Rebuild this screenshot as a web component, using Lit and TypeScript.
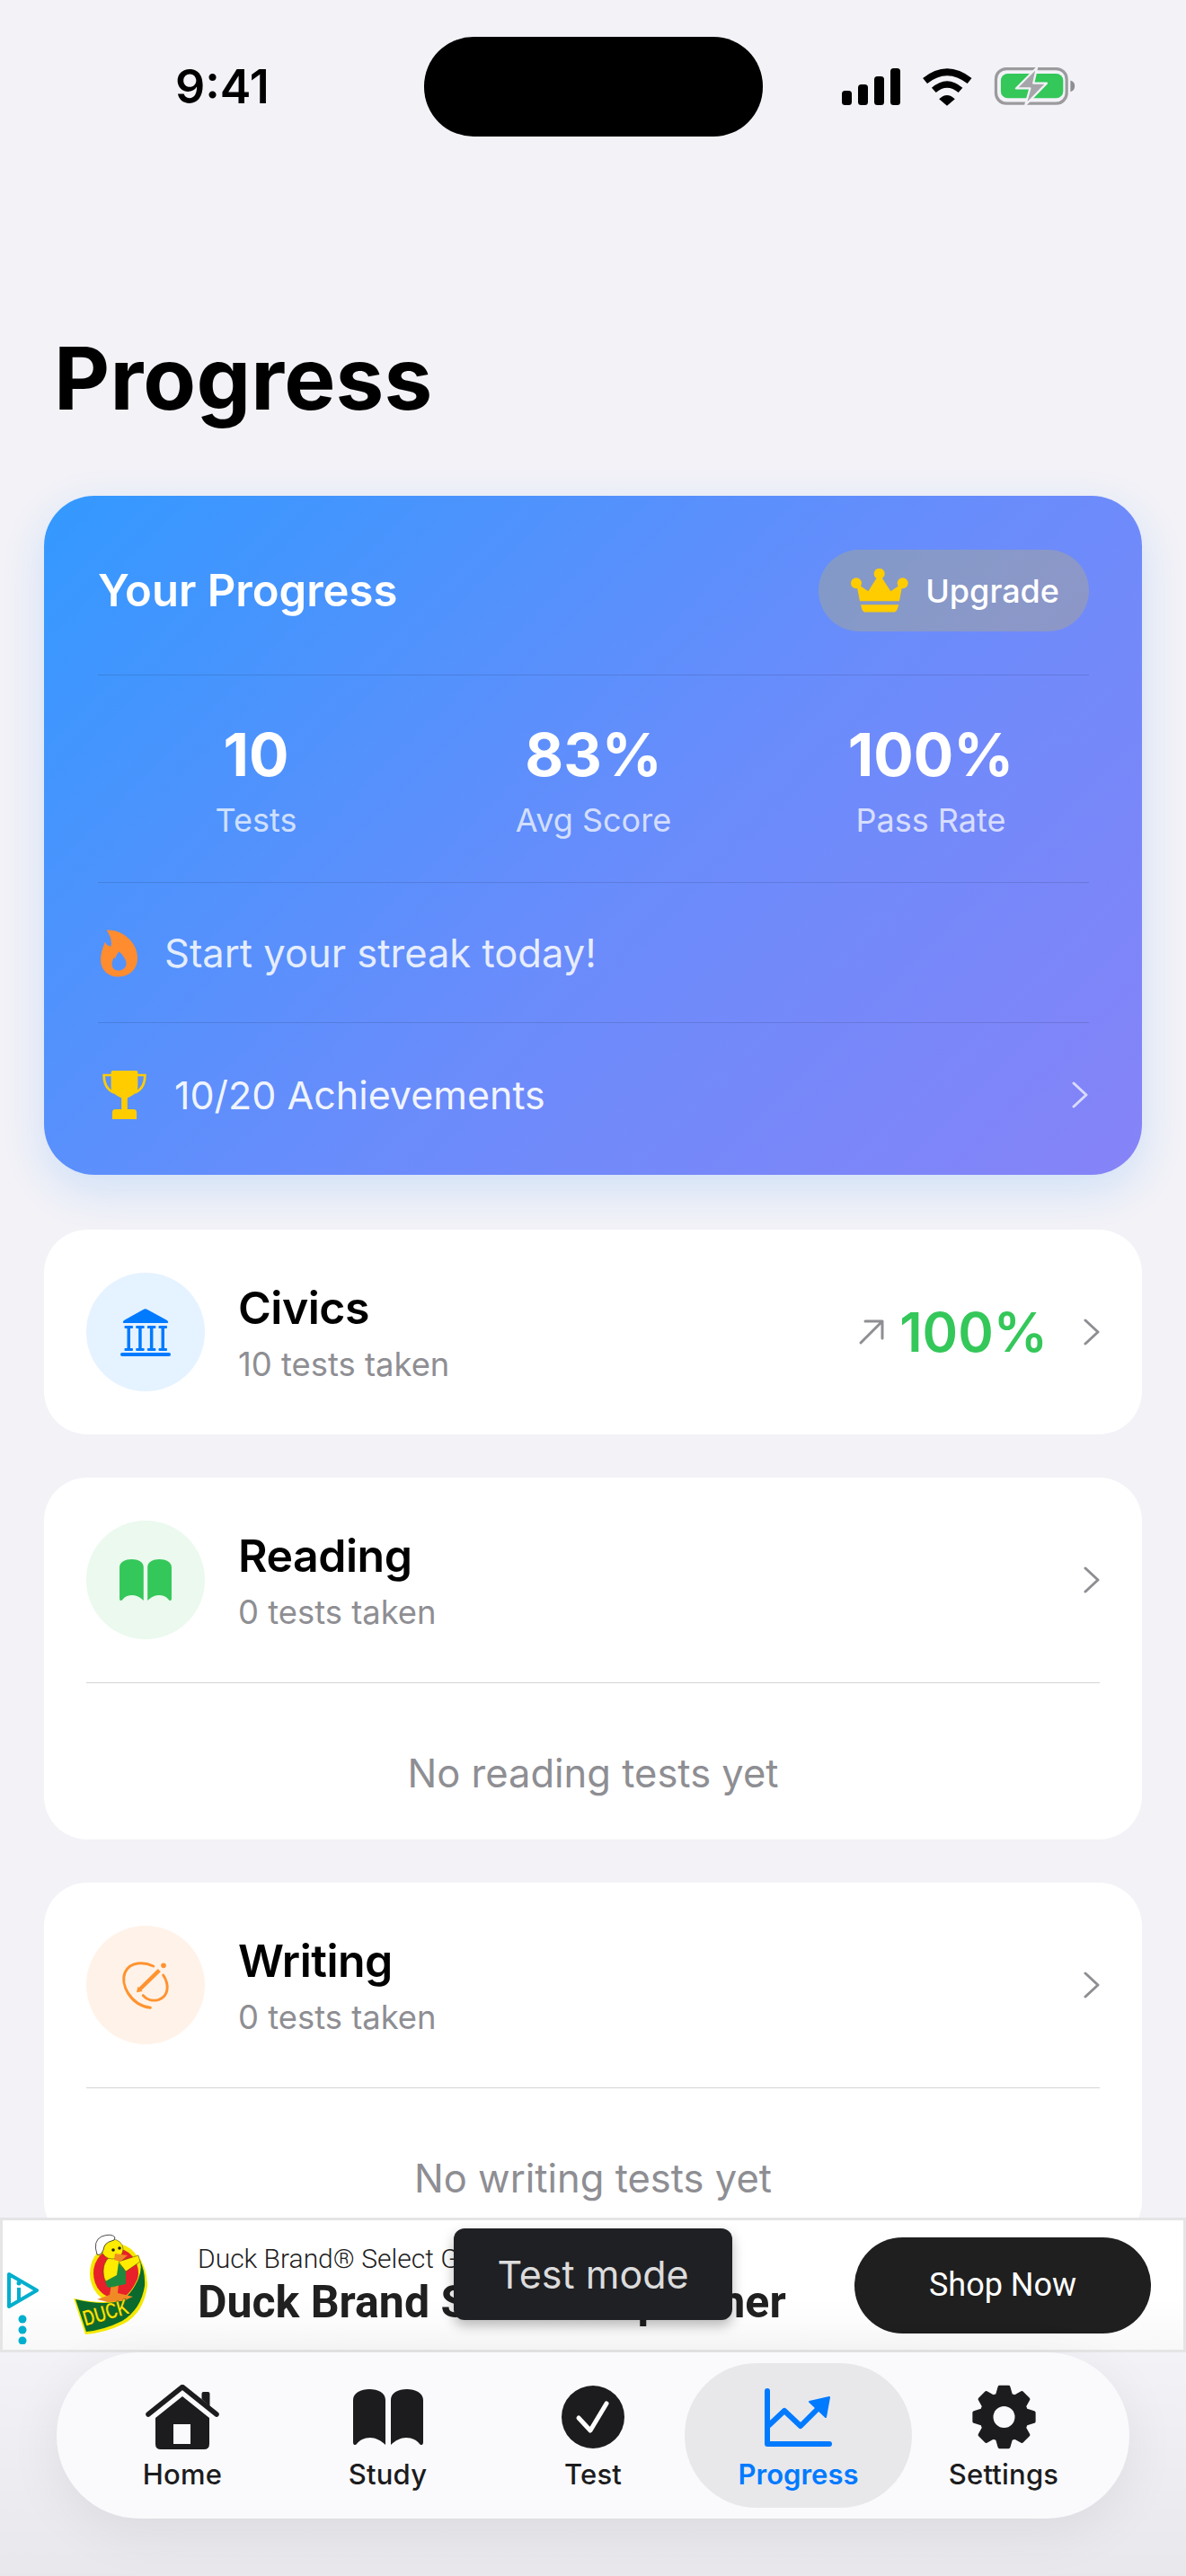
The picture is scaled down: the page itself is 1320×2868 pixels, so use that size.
import { LitElement, html, css, svg } from "lit";
import { customElement } from "lit/decorators.js";

const chevron = (cls: string) => html`<svg class="chev ${cls}" viewBox="0 0 18 30"><path d="M2 2 L16 15 L2 28" /></svg>`;

function gearPoints() {
  const pts: string[] = [];
  const c = 36;
  const add = (r: number, deg: number) => {
    const a = (deg * Math.PI) / 180;
    pts.push(`${(c + r * Math.cos(a)).toFixed(2)},${(c + r * Math.sin(a)).toFixed(2)}`);
  };
  for (let i = 0; i < 8; i++) {
    const a = i * 45 - 90;
    add(25.5, a - 17);
    add(33.5, a - 8.5);
    add(33.5, a + 8.5);
    add(25.5, a + 17);
  }
  return pts.join(" ");
}

const bookPaths = svg`<path d="M0 12C0 4 9 0 18 0C28 0 36 4 36 12V62C31 57 25 54 19 54C12 54 7 57 4 61C2 63 0 62 0 59Z"/><path d="M78 12C78 4 69 0 60 0C50 0 42 4 42 12V62C47 57 53 54 59 54C66 54 71 57 74 61C76 63 78 62 78 59Z"/>`;

@customElement("app-root")
export class AppRoot extends LitElement {
  static styles = css`
    :host { display: block; width: 1320px; height: 2868px; font-family: Inter, "Liberation Sans", sans-serif; }
    .screen { position: relative; width: 1320px; height: 2868px; overflow: hidden; background: #f2f2f7; color: #000; }
    .fade { position: absolute; left: 0; right: 0; bottom: 0; height: 250px; background: linear-gradient(to bottom, rgba(0,0,0,0), rgba(0,0,0,.045)); }
    svg { display: block; flex: none; }

    .status { display: flex; align-items: center; height: 111px; padding-top: 41px; }
    .time { width: 472px; box-sizing: border-box; padding-left: 195px; font-size: 52px; font-weight: 600; line-height: 60px; }
    .island { width: 377px; height: 111px; border-radius: 55px; background: #000; }
    .sys { display: flex; align-items: center; margin-left: 88px; }
    .signal { width: 65px; height: 41px; }
    .wifi { width: 58px; height: 43px; margin-left: 23px; }
    .battery { width: 93px; height: 45px; margin-left: 22px; }

    h1 { margin: 211px 0 73px 60px; font-size: 96px; line-height: 116px; font-weight: 700; letter-spacing: .2px; }

    .cards { display: flex; flex-direction: column; gap: 48px; margin: 0 49px; }
    .hero { box-sizing: border-box; height: 756px; padding: 0 59px 0 60px; margin-bottom: 13px; border-radius: 56px; color: #fff;
      background: linear-gradient(135deg, #3399ff 0%, #6a8cfb 55%, #8683f7 100%);
      box-shadow: 0 16px 48px rgba(0,122,255,.15); }
    .hero-head { display: flex; align-items: center; justify-content: space-between; padding: 60px 0 48px; border-bottom: 1px solid rgba(0,0,0,.12); }
    .hero-title { font-size: 49px; font-weight: 600; line-height: 58px; }
    .upgrade { display: flex; align-items: center; gap: 19px; height: 91px; box-sizing: border-box; padding: 0 33px 0 36px; border-radius: 46px; background: rgba(255,204,0,.2); font-size: 36px; font-weight: 500; }
    .crown { width: 64px; height: 49px; }
    .stats { display: grid; grid-template-columns: repeat(3, 375.5px); justify-content: center; align-content: center; height: 231px; box-sizing: border-box; border-bottom: 1px solid rgba(0,0,0,.12); text-align: center; }
    .stat-v { font-size: 66px; font-weight: 700; line-height: 78px; }
    .stat-l { margin-top: 13px; font-size: 36px; line-height: 42px; color: rgba(255,255,255,.72); }
    .streak { display: flex; align-items: center; height: 156px; box-sizing: border-box; padding-left: 3px; border-bottom: 1px solid rgba(0,0,0,.12); font-size: 43.5px; color: rgba(255,255,255,.85); gap: 30px; }
    .flame { width: 41px; height: 54px; }
    .ach { display: flex; align-items: center; height: 160px; padding-left: 5px; font-size: 43px; color: rgba(255,255,255,.92); gap: 31px; }
    .trophy { width: 49px; height: 54px; }
    .ach .chev { margin-left: auto; margin-right: 1px; }
    .chev { width: 18px; height: 30px; fill: none; stroke: #8e8e93; stroke-width: 3; stroke-linecap: round; stroke-linejoin: round; }
    .chev.light { stroke: rgba(255,255,255,.7); }

    .card { padding: 48px 47px; border-radius: 48px; background: #fff; }
    .row { display: flex; align-items: center; }
    .circle { display: flex; align-items: center; justify-content: center; width: 132px; height: 132px; border-radius: 50%; margin-right: 37px; flex: none; }
    .c-blue { background: #e5f2ff; }
    .c-green { background: #ebf9ee; }
    .c-orange { background: #fff3e9; }
    .names { display: flex; flex-direction: column; gap: 13px; margin-top: -2px; }
    .name { font-size: 50px; font-weight: 600; line-height: 60px; letter-spacing: -.5px; }
    .sub { font-size: 36.4px; line-height: 40px; color: #8e8e93; }
    .right { display: flex; align-items: center; margin-left: auto; }
    .arrow { width: 30px; height: 30px; margin-right: 16px; fill: none; stroke: #8e8e93; stroke-width: 3; stroke-linecap: round; stroke-linejoin: round; }
    .pct { margin-right: 40px; font-size: 60px; font-weight: 600; line-height: 70px; color: #34c759; }
    .divider { height: 1px; margin-top: 48px; background: #d4d4d6; }
    .empty { padding-top: 74px; font-size: 43.5px; line-height: 52px; color: #8e8e93; text-align: center; }

    .ad { position: absolute; left: 0; top: 2469px; display: flex; align-items: center; box-sizing: border-box; width: 1320px; height: 150px; padding: 0 36px 0 5px; border: 3px solid #e5e5e5; background: linear-gradient(to bottom, #fff 60%, #f8f8f8); font-family: Roboto, sans-serif; color: #202020; }
    .adchoice { width: 35px; height: 80px; margin-top: 52px; }
    .duck { width: 82px; height: 114px; margin-left: 39px; overflow: visible; }
    .adtext { flex: 1; margin-left: 56px; margin-top: -5px; white-space: nowrap; }
    .ad1 { font-size: 30px; font-weight: 300; line-height: 40px; }
    .ad2 { font-size: 50px; font-weight: 700; line-height: 52px; margin-top: 2px; }
    .gap { margin-left: 11px; }
    .shop { display: flex; align-items: center; justify-content: center; width: 330px; height: 107px; border-radius: 54px; background: #1f1f1f; color: #fff; font-size: 36px; }
    .toast { position: absolute; left: 502px; top: 9px; display: flex; align-items: center; justify-content: center; width: 310px; height: 102px; border-radius: 12px; background: #1f2024; color: rgba(255,255,255,.85); font-family: Inter, sans-serif; font-size: 43px; box-shadow: 0 6px 14px rgba(0,0,0,.28); }

    .nav { position: absolute; left: 63px; top: 2619px; isolation: isolate; display: grid; grid-template-columns: repeat(5, 228.5px); justify-content: center; width: 1194px; height: 185px; border-radius: 92px; background: #fafafc; box-shadow: 0 14px 60px rgba(0,0,0,.07); }
    .item { position: relative; display: flex; flex-direction: column; align-items: center; padding-top: 36px; color: #1c1c1e; font-size: 31px; font-weight: 500; letter-spacing: .2px; }
    .item .ic { display: flex; align-items: center; justify-content: center; height: 72px; fill: #1c1c1e; }
    .item .lbl { margin-top: 10px; line-height: 36px; }
    .item.on { color: #007aff; font-weight: 600; letter-spacing: 0; }
    .item.on::before { content: ""; position: absolute; z-index: -1; top: 12px; left: -12px; right: -12px; height: 161px; border-radius: 80px; background: #e8e8eb; }
  `;

  render() {
    return html`<div class="screen">
      <div class="fade"></div>
      <div class="status">
        <div class="time">9:41</div>
        <div class="island"></div>
        <div class="sys">
          <svg class="signal" viewBox="0 0 65 41"><rect x="0" y="25" width="11" height="16" rx="3.5"/><rect x="18" y="18" width="11" height="23" rx="3.5"/><rect x="36" y="9" width="11" height="32" rx="3.5"/><rect x="54" y="0" width="11" height="41" rx="3.5"/></svg>
          <svg class="wifi" viewBox="372 102 176 132"><path d="M385 148Q460 88 537 148" fill="none" stroke="#000" stroke-width="24"/><path d="M415 180Q460 140 506 180" fill="none" stroke="#000" stroke-width="22"/><path d="M433 210Q460 184 487 210L460 233Z"/></svg>
          <svg class="battery" viewBox="612 102 284 140"><rect x="620" y="110" width="245" height="120" rx="36" fill="none" stroke="#9b9b9e" stroke-width="10"/><rect x="637" y="127" width="216" height="85" rx="24" fill="#34c759"/><path d="M762 106L690 178H738L722 236L796 160H750Z" fill="#a5a5aa" stroke="#f2f2f7" stroke-width="7" stroke-linejoin="round"/><path d="M878 150Q893 154 893 170Q893 186 878 190Z" fill="#8e8e92"/></svg>
        </div>
      </div>

      <h1>Progress</h1>

      <div class="cards">
        <section class="hero">
          <div class="hero-head">
            <div class="hero-title">Your Progress</div>
            <div class="upgrade">
              <svg class="crown" viewBox="150 130 192 146" fill="#ffcc00"><circle cx="168" cy="178" r="18"/><circle cx="245" cy="147" r="18"/><circle cx="323" cy="178" r="18"/><path d="M168 178L180 238H312L323 178L283 205L245 147L208 205Z"/><path d="M183 250H310L305 265Q302 275 290 275H200Q190 275 187 265Z"/></svg>
              <span>Upgrade</span>
            </div>
          </div>
          <div class="stats">
            <div><div class="stat-v">10</div><div class="stat-l">Tests</div></div>
            <div><div class="stat-v">83%</div><div class="stat-l">Avg Score</div></div>
            <div><div class="stat-v">100%</div><div class="stat-l">Pass Rate</div></div>
          </div>
          <div class="streak">
            <svg class="flame" viewBox="65 72 125 161" fill="#ff8c2e"><path fill-rule="evenodd" d="M85 75C130 70 190 110 190 170C190 210 160 233 125 233C90 233 65 210 65 175C65 155 72 135 80 115C85 125 92 130 100 130C105 110 95 90 85 75ZM125 212C105 212 101 195 105 180C108 170 112 165 115 172C118 160 125 150 128 148C140 160 152 175 152 188C152 202 140 212 125 212Z"/></svg>
            <span>Start your streak today!</span>
          </div>
          <div class="ach">
            <svg class="trophy" viewBox="72 545 146 163"><path fill="#ffcc00" d="M106 545H184Q190 545 190 551V600C190 620 170 630 155 637V675H175Q186 675 186 686V708H104V686Q104 675 115 675H135V637C120 630 100 620 100 600V551Q100 545 106 545Z"/><path fill="none" stroke="#ffcc00" stroke-width="8" stroke-linecap="round" d="M100 560H76C76 590 90 610 108 618M190 560H214C214 590 200 610 182 618"/></svg>
            <span>10/20 Achievements</span>
            ${chevron("light")}
          </div>
        </section>

        <section class="card">
          <div class="row">
            <div class="circle c-blue">
              <svg width="56" height="53" viewBox="0 0 56 53" fill="#007aff"><path d="M25.5 1Q27.7 -.4 30 1L52 13Q54.500 15.500 52 16H4Q1.500 15.500 4 13Z"/><g><rect x="4.500" y="19" width="9.500" height="3" rx="1"/><rect x="17.200" y="19" width="9.500" height="3" rx="1"/><rect x="29.900" y="19" width="9.500" height="3" rx="1"/><rect x="42.500" y="19" width="9.500" height="3" rx="1"/><rect x="7.500" y="21" width="3.500" height="24"/><rect x="20.200" y="21" width="3.500" height="24"/><rect x="32.900" y="21" width="3.500" height="24"/><rect x="45.500" y="21" width="3.500" height="24"/><rect x="4.500" y="44" width="9.500" height="3" rx="1"/><rect x="17.200" y="44" width="9.500" height="3" rx="1"/><rect x="29.900" y="44" width="9.500" height="3" rx="1"/><rect x="42.500" y="44" width="9.500" height="3" rx="1"/></g><rect x="0" y="49" width="56" height="4" rx="2"/></svg>
            </div>
            <div class="names"><div class="name">Civics</div><div class="sub">10 tests taken</div></div>
            <div class="right">
              <svg class="arrow" viewBox="0 0 30 30"><path d="M3 27L27 3M8 3H27V22"/></svg>
              <div class="pct">100%</div>
              ${chevron("")}
            </div>
          </div>
        </section>

        <section class="card">
          <div class="row">
            <div class="circle c-green">
              <svg width="58" height="46" viewBox="0 0 78 62" fill="#34c759">${bookPaths}</svg>
            </div>
            <div class="names"><div class="name">Reading</div><div class="sub">0 tests taken</div></div>
            <div class="right">${chevron("")}</div>
          </div>
          <div class="divider"></div>
          <div class="empty">No reading tests yet</div>
        </section>

        <section class="card">
          <div class="row">
            <div class="circle c-orange">
              <svg width="55" height="55" viewBox="165 162 165 165"><g fill="none" stroke="#ff9330" stroke-linecap="round"><path stroke-width="9" d="M272 180C240 165 195 165 178 200C160 240 195 310 262 319"/><path stroke-width="9" d="M305 210C325 240 325 280 290 292C270 298 250 292 238 278"/><path stroke-width="13" stroke-linecap="butt" d="M226 258L292 194"/></g><path fill="#ff9330" d="M216 268L220 248L236 264Z"/><circle cx="306" cy="178" r="8.500" fill="#ff9330"/></svg>
            </div>
            <div class="names"><div class="name">Writing</div><div class="sub">0 tests taken</div></div>
            <div class="right">${chevron("")}</div>
          </div>
          <div class="divider"></div>
          <div class="empty">No writing tests yet</div>
        </section>
      </div>

      <div class="ad">
        <svg class="adchoice" viewBox="0 0 35 80"><path d="M2 2L33 20L2 38V2Z" fill="none" stroke="#00aecd" stroke-width="4" stroke-linejoin="round"/><path d="M13 17V32" stroke="#00aecd" stroke-width="4"/><circle cx="13" cy="12" r="2.500" fill="#00aecd"/><circle cx="17" cy="52" r="4.500" fill="#00aecd"/><circle cx="17" cy="64" r="4.500" fill="#00aecd"/><circle cx="17" cy="76" r="4.500" fill="#00aecd"/></svg>
        <svg class="duck" viewBox="0 0 82 114">
          <ellipse cx="47" cy="44" rx="29" ry="33" fill="#f5e800"/>
          <ellipse cx="47" cy="44" rx="25" ry="28" fill="#e8202a"/>
          <path d="M0 72Q28 78 46 75Q62 72 72 48Q76 36 70 22Q82 38 82 58Q78 88 56 100Q36 110 13 112Z" fill="#f5e800"/>
          <path d="M2 73Q28 79 46 76Q62 73 72 50Q77 38 73 28Q80 42 79 58Q75 84 54 97Q34 107 14 109Z" fill="#0a6a2e"/>
          <path d="M26 73L40 68L42 56L50 56L49 66L66 70L55 75L38 76Z" fill="#f08a24"/>
          <ellipse cx="44" cy="42" rx="11" ry="17" fill="#ffec00" stroke="#3a3a10" stroke-width=".5"/>
          <path d="M50 31L72 24L74 31L58 42Z" fill="#ffec00" stroke="#3a3a10" stroke-width=".5"/>
          <path d="M50 32L58 42L58 56L38 60L35 53L48 46Z" fill="#1f8a3d"/>
          <ellipse cx="43" cy="17" rx="12" ry="11" fill="#ffec00" stroke="#3a3a10" stroke-width=".5"/>
          <path d="M46 22L60 24L52 31L45 29Z" fill="#f08a24"/>
          <path d="M26 23Q21 8 31 3Q42 -1 46 4Q46 8 42 8Q34 10 33 18Q30 25 26 23Z" fill="#fff" stroke="#222" stroke-width=".8"/>
          <circle cx="44" cy="18" r="1.800" fill="#222"/><circle cx="51" cy="16" r="1.800" fill="#222"/>
          <text x="13" y="103" transform="rotate(-16 13 103)" font-family="'Liberation Sans Narrow','Liberation Sans',sans-serif" font-weight="700" font-size="25" textLength="52" lengthAdjust="spacingAndGlyphs" fill="#f5e800" stroke="#111" stroke-width=".4">DUCK</text>
        </svg>
        <div class="adtext">
          <div class="ad1">Duck Brand® Select Grip Liner</div>
          <div class="ad2">Duck Brand Select Grip <span class="gap">Liner</span></div>
        </div>
        <div class="shop">Shop Now</div>
        <div class="toast">Test mode</div>
      </div>

      <nav class="nav">
        <div class="item">
          <div class="ic"><svg width="82" height="72" viewBox="0 0 82 72"><path d="M11 37L41 13L71 37V66Q71 72 65 72H17Q11 72 11 66ZM31 44V66H50V44Z" fill-rule="evenodd"/><path d="M3 33L41 2.500L79 33" fill="none" stroke="#1c1c1e" stroke-width="5.500" stroke-linecap="round" stroke-linejoin="round"/><path d="M62.500 10Q62.500 8 64.500 8H69.500Q71.500 8 71.500 10V24L62.500 16Z"/></svg></div>
          <div class="lbl">Home</div>
        </div>
        <div class="item">
          <div class="ic"><svg width="78" height="62" viewBox="0 0 78 62">${bookPaths}</svg></div>
          <div class="lbl">Study</div>
        </div>
        <div class="item">
          <div class="ic"><svg width="70" height="70" viewBox="0 0 70 70"><circle cx="35" cy="35" r="35"/><path d="M19 36L32 50L50 20" fill="none" stroke="#fff" stroke-width="5" stroke-linecap="round" stroke-linejoin="round"/></svg></div>
          <div class="lbl">Test</div>
        </div>
        <div class="item on">
          <div class="ic"><svg width="75" height="65" viewBox="0 0 75 65"><path d="M3 3V62H72" fill="none" stroke="#007aff" stroke-width="6" stroke-linecap="round" stroke-linejoin="round"/><path d="M5 41L22 25L40 42L60 22" fill="none" stroke="#007aff" stroke-width="6" stroke-linecap="round" stroke-linejoin="round"/><path d="M50 15L72 10L68 32Z" fill="#007aff" stroke="#007aff" stroke-width="2" stroke-linejoin="round"/></svg></div>
          <div class="lbl">Progress</div>
        </div>
        <div class="item">
          <div class="ic"><svg width="73" height="72" viewBox="0 0 72 72"><path fill-rule="evenodd" stroke="#1c1c1e" stroke-width="4" stroke-linejoin="round" d="M${gearPoints().split(" ").join("L")}Z"/><circle cx="36" cy="36" r="12" fill="#fafafc"/></svg></div>
          <div class="lbl">Settings</div>
        </div>
      </nav>
    </div>`;
  }
}
